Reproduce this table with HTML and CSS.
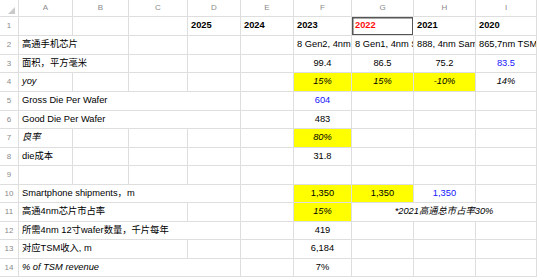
FILE: index.html
```html
<!DOCTYPE html>
<html>
<head>
<meta charset="utf-8">
<link rel="stylesheet" href="styles.css">
</head>
<body>
<div class="sheet">
  <div class="c corner"><span class="tri"></span></div>
  <div class="c h">A</div><div class="c h">B</div><div class="c h">C</div><div class="c h">D</div><div class="c h">E</div><div class="c h">F</div><div class="c h">G</div><div class="c h">H</div><div class="c h">I</div>

  <div class="c n">1</div>
  <div class="c"></div><div class="c"></div><div class="c"></div>
  <div class="c b">2025</div><div class="c b">2024</div><div class="c b">2023</div><div class="c b red sel">2022</div><div class="c b">2021</div><div class="c b">2020</div>

  <div class="c n">2</div>
  <div class="c s2">高通手机芯片</div><div class="c"></div><div class="c"></div><div class="c"></div>
  <div class="c">8 Gen2, 4nm</div><div class="c">8 Gen1, 4nm S</div><div class="c">888, 4nm Sam</div><div class="c">865,7nm TSM</div>

  <div class="c n">3</div>
  <div class="c s2">面积，平方毫米</div><div class="c"></div><div class="c"></div><div class="c"></div>
  <div class="c ctr">99.4</div><div class="c ctr">86.5</div><div class="c ctr">75.2</div><div class="c ctr blue">83.5</div>

  <div class="c n">4</div>
  <div class="c i">yoy</div><div class="c"></div><div class="c"></div><div class="c"></div><div class="c"></div>
  <div class="c ctr i y">15%</div><div class="c ctr i y">15%</div><div class="c ctr i y">-10%</div><div class="c ctr i">14%</div>

  <div class="c n">5</div>
  <div class="c s4">Gross Die Per Wafer</div><div class="c"></div>
  <div class="c ctr blue">604</div><div class="c"></div><div class="c"></div><div class="c"></div>

  <div class="c n">6</div>
  <div class="c s4">Good Die Per Wafer</div><div class="c"></div>
  <div class="c ctr">483</div><div class="c"></div><div class="c"></div><div class="c"></div>

  <div class="c n">7</div>
  <div class="c i">良率</div><div class="c"></div><div class="c"></div><div class="c"></div><div class="c"></div>
  <div class="c ctr i y">80%</div><div class="c"></div><div class="c"></div><div class="c"></div>

  <div class="c n">8</div>
  <div class="c">die成本</div><div class="c"></div><div class="c"></div><div class="c"></div><div class="c"></div>
  <div class="c ctr">31.8</div><div class="c"></div><div class="c"></div><div class="c"></div>

  <div class="c n">9</div>
  <div class="c"></div><div class="c"></div><div class="c"></div><div class="c"></div><div class="c"></div>
  <div class="c"></div><div class="c"></div><div class="c"></div><div class="c"></div>

  <div class="c n">10</div>
  <div class="c s4">Smartphone shipments，m</div><div class="c"></div>
  <div class="c ctr y">1,350</div><div class="c ctr y">1,350</div><div class="c ctr blue">1,350</div><div class="c"></div>

  <div class="c n">11</div>
  <div class="c s3">高通4nm芯片市占率</div><div class="c"></div><div class="c"></div>
  <div class="c ctr i y">15%</div><div class="c s3 ctr i">*2021高通总市占率30%</div>

  <div class="c n">12</div>
  <div class="c s4">所需4nm 12寸wafer数量，千片每年</div><div class="c"></div>
  <div class="c ctr">419</div><div class="c"></div><div class="c"></div><div class="c"></div>

  <div class="c n">13</div>
  <div class="c s3">对应TSM收入, m</div><div class="c"></div><div class="c"></div>
  <div class="c ctr">6,184</div><div class="c"></div><div class="c"></div><div class="c"></div>

  <div class="c n">14</div>
  <div class="c s4 i">% of TSM revenue</div><div class="c"></div>
  <div class="c ctr">7%</div><div class="c"></div><div class="c"></div><div class="c"></div>
</div>
</body>
</html>
```
FILE: styles.css
```css
html, body {
  margin: 0;
  padding: 0;
  background: #ffffff;
}

.sheet {
  display: grid;
  grid-template-columns: 19px 54px 56px 59px 53px 53px 58px 62px 62px 61px;
  grid-template-rows: 17px 19px 19px 18px 19px 19px 18px 19px 18px 19px 18px 19px 18px 19px 18px;
  width: 537px;
  font-family: "Liberation Sans", "Noto Sans CJK SC", sans-serif;
}

.c {
  box-sizing: border-box;
  border-right: 1px solid #dedede;
  border-bottom: 1px solid #dedede;
  display: flex;
  align-items: center;
  padding-left: 3px;
  font-size: 9.3px;
  line-height: 1;
  color: #000;
  white-space: nowrap;
  overflow: hidden;
  min-width: 0;
}

.h, .n {
  justify-content: center;
  padding-left: 0;
  color: #8a8a8a;
  font-size: 8px;
}

.corner {
  position: relative;
  padding: 0;
}

.tri {
  position: absolute;
  right: 3px;
  bottom: 2px;
  width: 0;
  height: 0;
  border-left: 7px solid transparent;
  border-bottom: 7px solid #c9c9c9;
}

.ctr {
  justify-content: center;
  padding-left: 0;
}

.b { font-weight: bold; }
.i { font-style: italic; }
.y { background: #ffff00; }
.blue { color: #1414ff; }
.red { color: #ff1010; }

.sel {
  box-shadow: inset 1.5px 1.5px 0 0 #555, inset -1px -1px 0 0 #555;
  border-right-color: #fff;
}

.s2 { grid-column: span 2; overflow: visible; }
.s3 { grid-column: span 3; overflow: visible; }
.s4 { grid-column: span 4; overflow: visible; }
```
